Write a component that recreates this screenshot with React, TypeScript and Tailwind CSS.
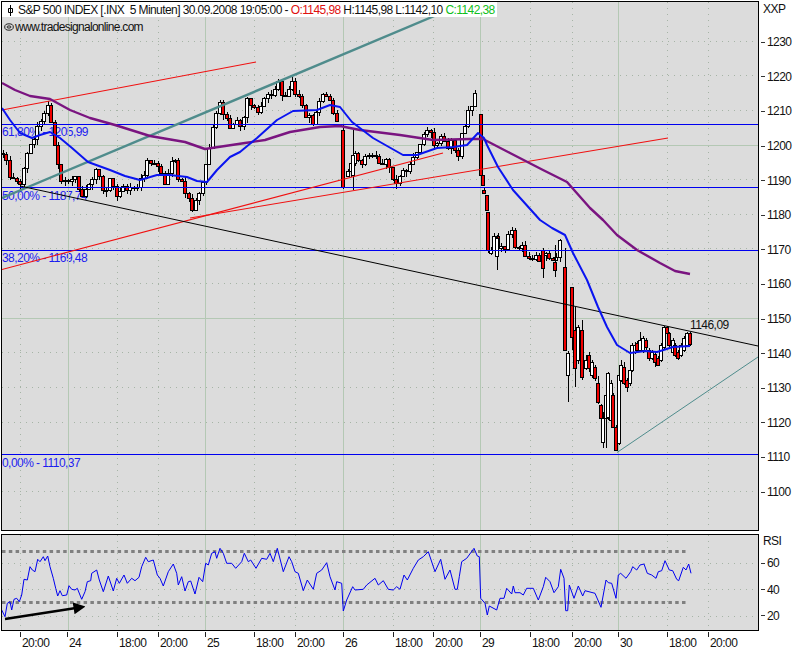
import React from "react";

type Pt = [number, number];
// x, body top, body bottom, red, wick top, wick bottom
type Candle = [number, number, number, number, number, number];

const rnd = (i: number) => {
  const v = Math.sin(i * 12.9898) * 43758.5453;
  return v - Math.floor(v);
};

const trackA: Pt[] = [[3,150],[8,170],[12,172],[17,182],[23,176],[25,153],[30,148],[35,133],[38,123],[45,113],[49,107],[52,130],[55,147],[58,170],[62,187],[68,175],[75,178],[82,200],[88,180],[98,167],[103,190],[110,178],[115,197],[120,187],[128,190],[135,193],[142,180],[147,158],[150,165],[155,158],[160,173],[165,187],[173,160],[177,170],[185,197],[193,210],[198,197],[202,187],[207,160],[213,130],[220,105],[227,123],[233,128],[243,122],[247,103],[257,115],[263,102],[277,82],[283,98],[292,78],[302,110],[305,117],[315,120],[325,87],[335,117],[339,120]];
const trackB: Pt[] = [[348,173],[351,160],[355,153],[360,163],[368,157],[375,150],[380,167],[385,158],[393,178],[400,180],[410,160],[420,142],[428,127],[435,145],[442,132],[447,145],[453,140],[457,158],[463,127],[470,107],[475,92],[477,96]];
const trackC: Pt[] = [[491,250],[495,235],[500,248],[505,250],[510,228],[515,245],[525,250],[530,255],[540,262],[545,250],[555,270],[560,245],[563,240]];

const explicit: Candle[] = [
  [343,130,187,1,125,189],[353,155,175,0,130,190],[481,114,175,1,114,178],[483,175,185,1,175,186],[484,190,193,1,188,194],[487,195,210,1,195,210],[488,212,250,1,212,253],
  [497,238,256,0,235,270],[543,250,268,1,248,278],[555,262,270,1,245,277],
  [565,267,350,1,248,350],[568,353,375,0,351,402],[572,287,337,1,287,350],[575,330,368,1,307,387],[578,327,360,0,325,364],[582,330,377,1,320,380],[586,360,368,0,355,370],[589,355,368,1,352,372],[592,362,375,0,360,378],[595,367,378,1,365,381],[598,383,402,1,376,404],[601,405,418,1,404,420],[603,418,442,0,412,448],[606,395,418,0,393,448],[608,373,417,0,372,420],[611,383,420,0,380,422],[613,395,427,1,393,428],[616,427,450,1,425,451],[619,375,443,0,373,445],[621,365,380,0,360,382],[624,367,383,1,362,385],[627,380,387,1,378,392],[630,370,383,0,368,386],[632,345,370,0,343,372],[635,345,352,0,342,354],[637,343,350,1,341,352],[640,340,350,0,332,352],[643,338,350,0,336,353],[646,340,347,1,338,350],[649,350,358,1,348,361],[652,352,358,0,350,360],[655,354,362,1,352,367],[658,358,365,1,356,366],[661,345,360,0,343,362],[664,327,347,0,326,349],[667,327,333,1,326,335],[669,333,345,1,332,347],[673,340,352,0,338,354],[675,345,355,1,343,357],[678,352,358,1,350,360],[681,345,355,0,343,357],[684,338,350,0,336,352],[687,333,345,0,332,347],[690,333,344,1,332,346],
];

const interp = (track: Pt[], x: number) => {
  for (let i = 1; i < track.length; i++) {
    if (x <= track[i][0]) {
      const [x0, y0] = track[i - 1];
      const [x1, y1] = track[i];
      return y0 + ((y1 - y0) * (x - x0)) / (x1 - x0);
    }
  }
  return track[track.length - 1][1];
};

const genCandles = (track: Pt[], seed: number, amp: number): Candle[] => {
  const out: Candle[] = [];
  let prev = track[0][1] + 3;
  const end = track[track.length - 1][0];
  let n = seed;
  for (let x = track[0][0]; x <= end; x += 3.44) {
    n++;
    const c = interp(track, x) + (rnd(n) - 0.5) * amp;
    const top = Math.min(prev, c);
    const bottom = Math.max(prev, c, top + 1);
    out.push([x, top, bottom, c > prev ? 1 : 0, top - rnd(n + 500) * 4, bottom + rnd(n + 900) * 6]);
    prev = c;
  }
  return out;
};

const candles = [...genCandles(trackA, 10, 12), ...genCandles(trackB, 300, 10), ...genCandles(trackC, 600, 13), ...explicit];

const blueMa: Pt[] = [[2,108],[10,120],[20,133],[32,138],[40,135],[50,132],[60,138],[72,148],[88,162],[110,170],[125,176],[140,180],[157,175],[170,175],[187,177],[197,181],[207,182],[217,170],[230,157],[240,152],[257,138],[277,120],[293,111],[317,110],[330,105],[340,107],[352,122],[373,138],[403,155],[417,155],[437,148],[453,147],[467,145],[478,133],[484,138],[487,145],[498,167],[513,190],[540,220],[552,228],[565,235],[573,253],[587,280],[598,307],[607,327],[617,345],[630,353],[645,351],[657,352],[673,347],[690,346]];
const purpleMa: Pt[] = [[2,83],[15,90],[30,96],[50,99],[70,110],[90,118],[115,125],[150,136],[185,142],[205,149],[225,146],[245,143],[265,140],[290,132],[320,127],[340,126],[360,130],[400,135],[433,140],[470,139],[483,139],[510,153],[543,170],[567,182],[590,208],[603,220],[617,235],[637,250],[660,263],[675,271],[690,274]];

const rsiLeft: Pt[] = [[5,270],[15,290],[22,250],[30,245],[35,270],[42,238],[50,235],[58,245],[65,225],[72,178],[82,180],[90,140],[97,150],[105,155],[113,118],[120,125],[130,110],[135,122],[143,108],[150,140],[160,175],[167,205],[173,228],[180,212],[187,227],[200,225],[207,197],[215,208],[225,210],[232,205],[245,238],[255,215],[262,185],[272,182],[275,160],[290,150],[298,180],[310,215],[325,168],[340,213],[350,175],[358,190],[372,165],[382,190],[395,175],[405,182],[417,172],[425,140],[437,112],[445,125],[460,120],[472,165],[480,175],[490,198],[505,155],[520,132],[530,160],[535,195],[545,170],[555,213],[565,185],[572,183],[585,222],[597,172],[608,185],[617,130],[625,135],[635,100],[645,95],[650,115],[660,85],[670,100],[680,130],[695,130],[707,145],[725,125],[733,100],[745,125],[752,120],[768,145],[785,115],[800,118],[810,100],[820,125],[832,85],[850,155],[867,110],[875,125],[885,155],[895,160],[910,212],[922,180],[940,208],[950,160],[965,150],[980,128],[990,170],[1005,210],[1010,185],[1025,190],[1030,273],[1040,240],[1058,200],[1065,210],[1090,208],[1100,195],[1125,175],[1135,195],[1150,182],[1165,208],[1180,210],[1190,200]];
const rsiRight: Pt[] = [[0,208],[12,165],[22,180],[40,145],[55,120],[70,110],[85,95],[105,155],[122,118],[135,178],[150,150],[165,208],[172,208],[178,170],[185,125],[200,115],[222,85],[232,108],[238,110],[242,235],[255,250],[262,285],[268,258],[290,270],[300,235],[312,235],[320,205],[335,222],[340,198],[345,218],[360,218],[370,225],[380,205],[400,205],[415,240],[430,200],[437,172],[450,185],[462,218],[475,200],[482,148],[492,175],[497,272],[503,272],[508,195],[522,235],[535,198],[548,228],[555,212],[585,220],[603,262],[618,180],[625,188],[635,190],[648,235],[655,165],[662,160],[678,175],[692,155],[698,140],[710,150],[720,135],[732,132],[742,160],[755,165],[768,175],[775,155],[785,152],[795,122],[808,150],[818,152],[830,178],[836,182],[850,142],[858,150],[866,132],[873,160]];
const rsi = [
  ...rsiLeft.map(([x, y]) => `${(x / 3).toFixed(1)},${(520 + y / 3).toFixed(1)}`),
  ...rsiRight.map(([x, y]) => `${(400 + x / 3).toFixed(1)},${(520 + y / 3).toFixed(1)}`),
].join(" ");

const line = (pts: Pt[]) => pts.map((p) => p.join(",")).join(" ");

const dayLines = [68, 205, 343, 480, 618];
const dotX = [20, 117, 158, 254, 295, 393, 433, 530, 572, 667, 708];
const dotY = [41, 75, 110, 179, 214, 248, 283, 352, 387, 422, 491];

const priceLabels = [1230, 1220, 1210, 1200, 1190, 1180, 1170, 1160, 1150, 1140, 1130, 1120, 1110, 1100];
const timeLabels = ["20:00", "24", "18:00", "20:00", "25", "18:00", "20:00", "26", "18:00", "20:00", "29", "18:00", "20:00", "30", "18:00", "20:00"];

const GRID = "#b4c8b4";
const DOT = "#a6b4a6";

const App = () => {
  return (
    <div className="w-[800px] h-[650px] bg-white pl-px pt-px text-[12px] leading-[12px] tracking-[-0.55px] text-[#111] overflow-hidden grid grid-cols-[758px_1fr] grid-rows-[533px_97px_19px] font-['Liberation_Sans',Arial,sans-serif]">
      <div className="relative h-[530px] border border-black bg-[#dcdcdc] overflow-hidden">
        <span className="absolute left-0 top-[124px] text-[#1c1cf0]">61,80% - 1205,99</span>
        <span className="absolute left-0 top-[188px] text-[#1c1cf0]">50,00% - 1187,74</span>
        <span className="absolute left-0 top-[250px] text-[#1c1cf0]">38,20% - 1169,48</span>
        <span className="absolute left-0 top-[455px] text-[#1c1cf0]">0,00% - 1110,37</span>

        <svg className="absolute inset-0 w-full h-full" viewBox="2 2 756 528">
          <g shapeRendering="crispEdges">
            {dotY.map((y) => (
              <line key={y} x1={2} x2={758} y1={y + 0.5} y2={y + 0.5} stroke={DOT} strokeDasharray="1 5" />
            ))}
            {dotX.map((x) => (
              <line key={x} x1={x + 0.5} x2={x + 0.5} y1={2} y2={530} stroke={DOT} strokeDasharray="1 5" />
            ))}
            {dayLines.map((x) => (
              <line key={x} x1={x + 0.5} x2={x + 0.5} y1={2} y2={530} stroke={GRID} />
            ))}
            <line x1={2} x2={758} y1={145.5} y2={145.5} stroke={GRID} />
            <line x1={2} x2={758} y1={318.5} y2={318.5} stroke={GRID} />
          </g>

          <g shapeRendering="crispEdges">
            {candles.map(([x, top, bottom, red, wt, wb], i) => {
              const cx = Math.round(x);
              const t = Math.round(top);
              const b = Math.max(Math.round(bottom), t + 1);
              return (
                <g key={i}>
                  <line x1={cx + 0.5} x2={cx + 0.5} y1={Math.round(wt)} y2={Math.round(wb)} stroke="#000" />
                  <rect x={cx - 1.5} y={t + 0.5} width={3} height={b - t} fill={red ? "#f00000" : "#fff"} stroke="#000" />
                </g>
              );
            })}
          </g>

          {[124, 187, 250, 454].map((y) => (
            <line key={y} x1={2} x2={758} y1={y + 0.5} y2={y + 0.5} stroke="#0000f0" strokeWidth={1.2} />
          ))}
          <line x1={2} y1={198} x2={470} y2={1} stroke="#4f8c8c" strokeWidth={2.4} />
          <line x1={617} y1={452.5} x2={758} y2={357} stroke="#4f8c8c" strokeWidth={1} />
          <line x1={2} y1={110} x2={256} y2={62} stroke="#f01010" strokeWidth={1.1} />
          <line x1={0} y1={270} x2={443} y2={153} stroke="#f01010" strokeWidth={1.1} />
          <line x1={190} y1={218} x2={668} y2={138} stroke="#f01010" strokeWidth={1.1} />
          <line x1={20} y1={186} x2={758} y2={346} stroke="#000" strokeWidth={1} />
          <polyline points={line(purpleMa)} fill="none" stroke="#7a1480" strokeWidth={2.4} strokeLinejoin="round" />
          <polyline points={line(blueMa)} fill="none" stroke="#0a14f0" strokeWidth={2} strokeLinejoin="round" />
        </svg>

        <div className="absolute left-0 top-0 h-[15px] w-[495px] bg-white flex items-center whitespace-pre tracking-[-0.58px]">
          <svg width="16" height="15" viewBox="0 0 16 15" className="shrink-0">
            <path d="M8.5 3v11M6.5 6.5h4v4h-4z" fill="none" stroke="#000" />
          </svg>
          <span>S&amp;P 500 INDEX [.INX  5 Minuten] 30.09.2008 19:05:00 - </span>
          <span className="text-[#e01010]">O:1145,98</span>
          <span> H:1145,98 L:1142,10 </span>
          <span className="text-[#10c020]">C:1142,38</span>
        </div>
        <div className="absolute left-[2px] top-[19px] flex items-center gap-[1px] whitespace-pre tracking-[-0.7px]">
          <svg width="10" height="8" viewBox="0 0 10 8">
            <ellipse cx="5" cy="4" rx="4.3" ry="3.2" fill="none" stroke="#222" />
            <ellipse cx="5" cy="4" rx="2" ry="1.1" fill="none" stroke="#222" />
          </svg>
          <span>www.tradesignalonline.com</span>
        </div>
        <span className="absolute left-[688px] top-[317px]">1146,09</span>
      </div>

      <div className="h-[530px] flex flex-col">
        <div className="h-[24px] pl-[4px] pt-[2px]">XXP</div>
        {priceLabels.map((p) => (
          <div key={p} className="h-[34.6px] flex items-center">
            <div className="ml-[2px] w-[4px] h-px bg-[#333]" />
            <span className="ml-[2px]">{p}</span>
          </div>
        ))}
      </div>

      <div className="relative h-[97px] border border-black bg-[#dcdcdc] overflow-hidden">
        <svg className="absolute inset-0 w-full h-full" viewBox="2 535 756 95">
          <defs>
            <marker id="head" markerWidth="5" markerHeight="5" refX="1" refY="2.5" orient="auto">
              <path d="M0 0L5 2.5L0 5z" fill="#000" />
            </marker>
          </defs>
          <g shapeRendering="crispEdges">
            {[563, 589, 616].map((y) => (
              <line key={y} x1={2} x2={758} y1={y + 0.5} y2={y + 0.5} stroke={DOT} strokeDasharray="1 5" />
            ))}
            {dotX.map((x) => (
              <line key={x} x1={x + 0.5} x2={x + 0.5} y1={535} y2={630} stroke={DOT} strokeDasharray="1 5" />
            ))}
            {dayLines.map((x) => (
              <line key={x} x1={x + 0.5} x2={x + 0.5} y1={535} y2={630} stroke={GRID} />
            ))}
          </g>
          <line x1={2} x2={688} y1={551.5} y2={551.5} stroke="#808080" strokeWidth={3} strokeDasharray="3.5 3.3" />
          <line x1={2} x2={688} y1={602.5} y2={602.5} stroke="#808080" strokeWidth={3} strokeDasharray="3.5 3.3" />
          <polyline points={rsi} fill="none" stroke="#0000f0" strokeWidth={1} strokeLinejoin="round" />
          <line x1={5} y1={619} x2={76} y2={608} stroke="#000" strokeWidth={2.4} markerEnd="url(#head)" />
        </svg>
      </div>

      <div className="h-[97px] flex flex-col">
        <div className="h-[14px] pl-[4px] flex items-center">RSI</div>
        {[60, 40, 20].map((p) => (
          <div key={p} className="h-[26.4px] flex items-center first-of-type:mt-0 [&:nth-child(2)]:mt-[2px]">
            <div className="ml-[2px] w-[4px] h-px bg-[#333]" />
            <span className="ml-[2px]">{p}</span>
          </div>
        ))}
      </div>

      <div className="col-span-2 pt-[1px] grid grid-cols-[19px_47px_50px_41px_47px_49px_41px_48px_50px_40px_47px_50px_42px_46px_49px_41px_1fr]">
        <div />
        {timeLabels.map((t, i) => (
          <div key={i} className="whitespace-nowrap">
            <div className="w-px h-[5px] bg-[#222]" />
            <div className="pl-[2px]">{t}</div>
          </div>
        ))}
      </div>
    </div>
  );
};

export default App;
